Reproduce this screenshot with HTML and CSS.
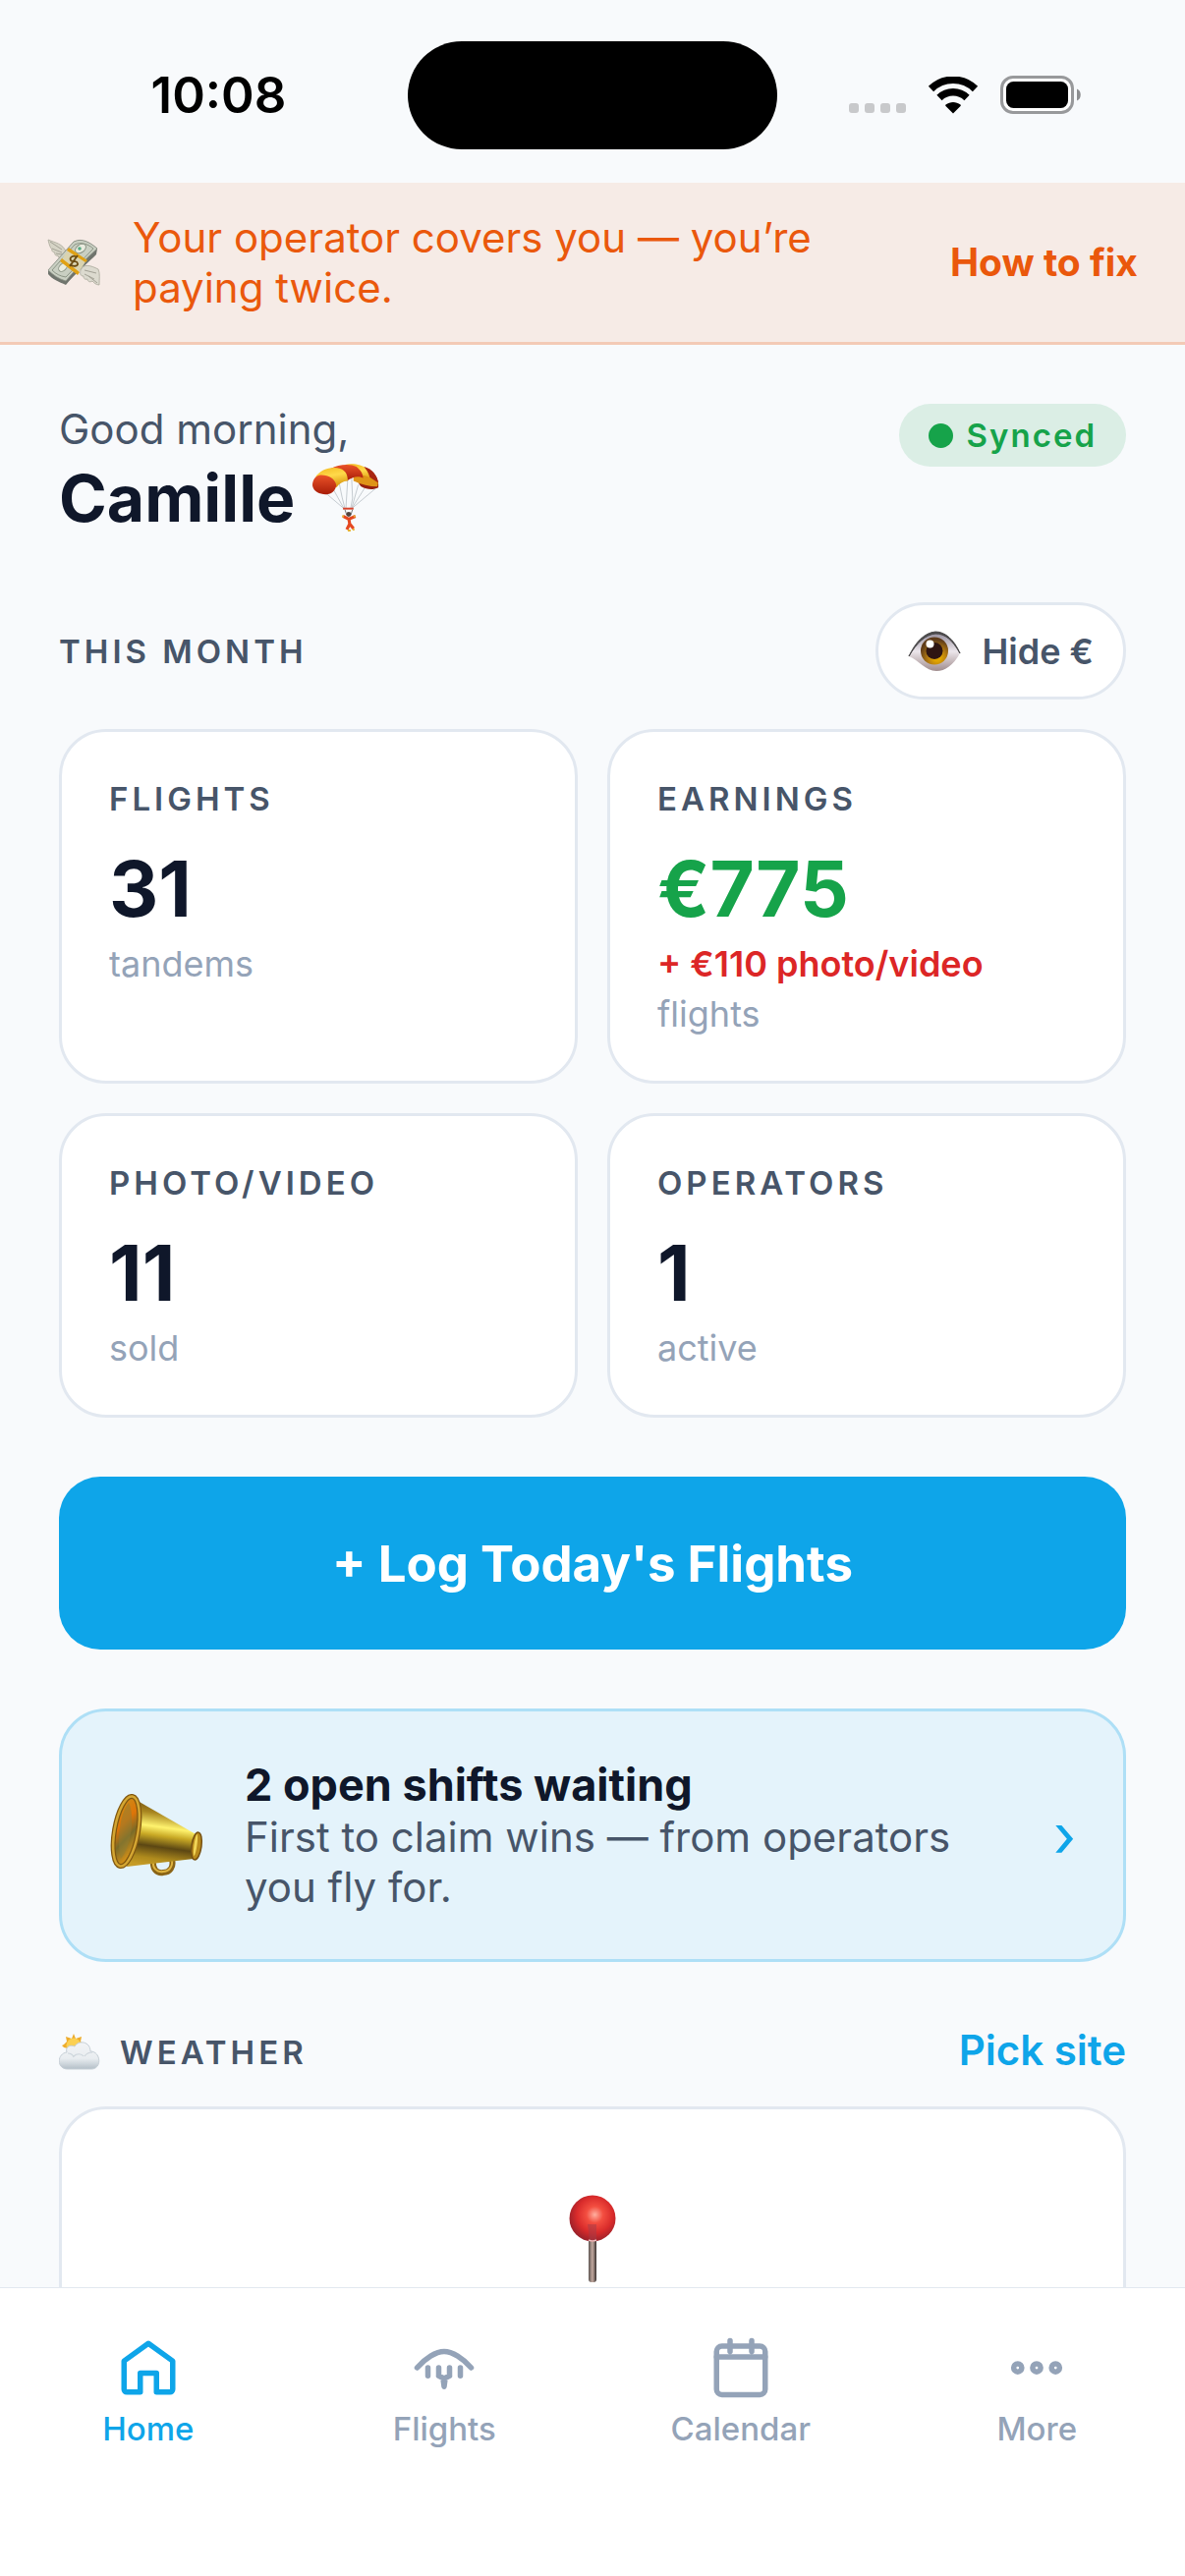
FILE: index.html
```html
<!DOCTYPE html>
<html lang="en">
<head>
    <meta charset="UTF-8">
    <meta name="viewport" content="width=device-width, initial-scale=1.0">
    <title>Home</title>
    <link rel="stylesheet" href="styles.css">
</head>
<body>
    <div class="app">
        <!-- Status bar -->
        <div class="status-bar">
            <span class="time">10:08</span>
            <span class="island"></span>
            <span class="status-icons">
                <svg width="58" height="38" viewBox="0 0 58 38" fill="#c8c9cb">
                    <rect x="0" y="27" width="10" height="10" rx="3" />
                    <rect x="16" y="27" width="10" height="10" rx="3" />
                    <rect x="32" y="27" width="10" height="10" rx="3" />
                    <rect x="48" y="27" width="10" height="10" rx="3" />
                </svg>
                <svg width="52" height="38" viewBox="0 0 52 38">
                    <path d="M3.5 12.5A32 32 0 0 1 48.5 12.5" fill="none" stroke="#000" stroke-width="7.5" />
                    <path d="M12 21.5A20 20 0 0 1 40 21.5" fill="none" stroke="#000" stroke-width="7.5" />
                    <path d="M26 37.5L18.5 30C18 29.5 18 29 18.5 28.5C23 25 29 25 33.5 28.5C34 29 34 29.5 33.5 30Z" />
                </svg>
                <svg width="83" height="40" viewBox="0 0 83 40">
                    <rect x="1.5" y="1.5" width="72" height="36" rx="11.5" fill="#fff" stroke="#98999b" stroke-width="3" />
                    <rect x="6" y="6" width="63" height="27" rx="7.5" />
                    <path d="M78 13.5C83 15 83 24 78 25.5Z" fill="#8d8e90" />
                </svg>
            </span>
        </div>

        <!-- Alert banner -->
        <div class="banner">
            <svg class="banner-icon" viewBox="0 0 54 48">
                <path d="M19 13C16 5 8 4 1 1C2 6 3 9 5 11C4 12 6 14 8 14C7 16 9 18 11 17C11 20 14 20 16 19Z" fill="#d6d4c6" stroke="#aaa89b" stroke-width="0.8" />
                <path d="M3 3L15 11M5 10L15 14M9 15L16 16" stroke="#a3a195" stroke-width="1" fill="none" />
                <path d="M1 33L27 3C35 -1 43 3 51 10L50 16C43 23 28 36 19 47C12 44 5 41 1 36Z" fill="#6f746d" />
                <path d="M1 32L27 3C35 -1 43 3 51 10C41 19 29 31 19 43C12 41 6 37 1 32Z" fill="#c9cfc2" stroke="#858b80" stroke-width="0.8" />
                <path d="M5 32L28 6C34 3 41 5 47 10L19 39C13 38 9 36 5 32Z" fill="none" stroke="#8d9687" stroke-width="1" />
                <ellipse cx="34" cy="10" rx="6" ry="4" transform="rotate(-35 34 10)" fill="#e9ecdf" stroke="#8d9687" />
                <circle cx="33" cy="10" r="1.8" fill="#55a982" />
                <ellipse cx="16" cy="29" rx="5" ry="3.5" transform="rotate(-45 16 29)" fill="#e9ecdf" stroke="#8d9687" />
                <path d="M14 22L22 10L40 22L31 36Z" fill="#d9d3b0" />
                <path d="M22 9L41 22L39 24L20 12ZM15 20L33 34L31 37L13 23Z" fill="#e0a114" />
                <path d="M30 19C27 16 22 19 24 22C26 25 30 21 31 25C32 28 26 29 23 26M31 17L23 28" fill="none" stroke="#6a4a10" stroke-width="1.8" />
                <path d="M34 32C37 25 44 27 52 31C54 35 53 41 53 47C49 47 47 44 46 43C43 45 41 43 41 41C38 42 37 40 37 38C34 38 33 36 34 32Z" fill="#dcdacf" stroke="#aaa89b" stroke-width="0.8" />
                <path d="M38 32L50 35M38 36L48 41M42 38L51 45" stroke="#a3a195" stroke-width="1" fill="none" />
            </svg>
            <p class="banner-text">Your operator covers you — you’re paying twice.</p>
            <button class="banner-action" type="button">How to fix</button>
        </div>

        <main class="content">
            <header class="greeting">
                <div>
                    <p class="hello">Good morning,</p>
                    <h1 class="name">Camille
                        <svg class="name-icon" viewBox="0 0 70 72">
                            <defs>
                                <linearGradient id="wing-red" x1="0" y1="0" x2="0" y2="1">
                                    <stop offset="0" stop-color="#ea5228" />
                                    <stop offset="1" stop-color="#a81c08" />
                                </linearGradient>
                                <linearGradient id="wing-yellow" x1="0" y1="0" x2="0.3" y2="1">
                                    <stop offset="0" stop-color="#f3b91f" />
                                    <stop offset="0.5" stop-color="#ffd94a" />
                                    <stop offset="1" stop-color="#dc9a12" />
                                </linearGradient>
                            </defs>
                            <path d="M13 30L33 47M22 27L33 47M28 20L31 35L34 47M37 15L35 47M41 15L42 36L40 47M48 22L41 47M55 25L41 47M66 26L41 47" fill="none" stroke="#c3c9ce" stroke-width="1" />
                            <path d="M55 4C65 7 70 16 69 25C63 28 57 27 51 24C46 18 44 10 55 4Z" fill="#96200f" />
                            <path d="M43 10C51 8 62 12 69 19L68 24C60 24 51 22 43 18Z" fill="#df9418" />
                            <path d="M34 1C42 -1 52 1 57 5C62 8 66 14 67 19C60 13 53 11 47 12Z" fill="url(#wing-yellow)" />
                            <path d="M54 3C62 5 68 12 69 20L60 14C59 9 56 6 54 3Z" fill="#a92611" />
                            <path d="M19 5C28 0 40 0 46 3C51 7 53 11 53 15C47 12 42 14 36 18C35 10 29 7 19 5Z" fill="url(#wing-red)" />
                            <path d="M3 14C8 6 20 2 29 5C35 7 37 12 37 18C32 18 28 21 25 25C22 16 14 12 3 14Z" fill="url(#wing-yellow)" />
                            <path d="M0 23C0 17 3 13 7 12C15 11 24 15 25 23C24 28 20 32 16 32C10 33 1 30 0 23Z" fill="url(#wing-red)" />
                            <path d="M32 47H43" stroke="#d8422b" stroke-width="2" />
                            <path d="M34 48L36 54M42 48L40 54" stroke="#777" stroke-width="1" />
                            <circle cx="38" cy="53" r="2.5" fill="#51423d" />
                            <path d="M32 55L38 58L45 55M38 57L39 63L36 69M39 63L43 68" fill="none" stroke="#e54820" stroke-width="3.2" stroke-linejoin="round" />
                            <path d="M32 54V56M44 54V56M37 70H40M42 69H44" stroke="#e8b330" stroke-width="2" />
                        </svg>
                    </h1>
                </div>
                <span class="synced"><span class="synced-dot"></span>Synced</span>
            </header>

            <div class="section-head">
                <h2 class="label">THIS MONTH</h2>
                <button class="hide-button" type="button">
                    <svg class="hide-icon" viewBox="0 0 54 42">
                        <defs>
                            <linearGradient id="eye-white" x1="0" y1="0" x2="0" y2="1">
                                <stop offset="0" stop-color="#8f8898" />
                                <stop offset="0.5" stop-color="#ece6eb" />
                                <stop offset="1" stop-color="#a08c8d" />
                            </linearGradient>
                            <radialGradient id="eye-iris" cx="0.6" cy="0.75" r="0.65">
                                <stop offset="0.2" stop-color="#e0a400" />
                                <stop offset="0.5" stop-color="#b87e10" />
                                <stop offset="1" stop-color="#5f3c1a" />
                            </radialGradient>
                        </defs>
                        <path d="M1 26C8 11 17 2 28 1C38 1 47 9 53 23C46 35 38 41 29 41C18 41 11 30 1 26Z" fill="url(#eye-white)" />
                        <circle cx="27" cy="20.5" r="14" fill="url(#eye-iris)" />
                        <circle cx="27" cy="20.5" r="8.5" fill="#2e1512" />
                        <circle cx="22.5" cy="13.5" r="4" fill="#fff" />
                        <path d="M1 26C8 11 17 2 28 1C38 1 47 9 53 23C45 9 38 3 28 3C18 4 9 12 1 26Z" fill="#4b4a4b" stroke="#4b4a4b" />
                    </svg>
                    Hide €
                </button>
            </div>

            <!-- Monthly stats -->
            <section class="stats">
                <div class="card">
                    <h3 class="label">FLIGHTS</h3>
                    <p class="value">31</p>
                    <p class="sub">tandems</p>
                </div>
                <div class="card">
                    <h3 class="label">EARNINGS</h3>
                    <p class="value earned">€775</p>
                    <p class="sub extra">+ €110 photo/video</p>
                    <p class="sub">flights</p>
                </div>
                <div class="card">
                    <h3 class="label">PHOTO/VIDEO</h3>
                    <p class="value">11</p>
                    <p class="sub">sold</p>
                </div>
                <div class="card">
                    <h3 class="label">OPERATORS</h3>
                    <p class="value">1</p>
                    <p class="sub">active</p>
                </div>
            </section>

            <button class="log-button" type="button">+ Log Today's Flights</button>

            <!-- Open shifts -->
            <a class="shifts" href="#shifts">
                <svg class="shifts-icon" viewBox="0 0 96 84">
                    <defs>
                        <linearGradient id="horn" x1="0.55" y1="0" x2="0.4" y2="1">
                            <stop offset="0" stop-color="#6b4a12" />
                            <stop offset="0.2" stop-color="#a98620" />
                            <stop offset="0.4" stop-color="#fff36e" />
                            <stop offset="0.53" stop-color="#c9a925" />
                            <stop offset="0.7" stop-color="#5c4713" />
                            <stop offset="0.88" stop-color="#ae8a1d" />
                            <stop offset="1" stop-color="#c69c27" />
                        </linearGradient>
                        <linearGradient id="horn-inside" x1="0" y1="0" x2="0.5" y2="1">
                            <stop offset="0" stop-color="#c5951d" />
                            <stop offset="0.45" stop-color="#de7408" />
                            <stop offset="0.7" stop-color="#7a6b28" />
                            <stop offset="1" stop-color="#d39018" />
                        </linearGradient>
                    </defs>
                    <path d="M45 68C44 77 49 81 55 80C62 80 66 74 64 67" fill="none" stroke="#8a6416" stroke-width="6" />
                    <path d="M45 68C44 76 49 80 55 79C61 79 65 74 64 67" fill="none" stroke="#dfb440" stroke-width="2" />
                    <path d="M29 7L90 42C91 50 90 60 86 66L18 74Z" fill="url(#horn)" />
                    <ellipse cx="17.5" cy="38" rx="12" ry="36" transform="rotate(10 17.5 38)" fill="url(#horn-inside)" stroke="#80570f" stroke-width="5" />
                    <ellipse cx="17.5" cy="38" rx="12" ry="36" transform="rotate(10 17.5 38)" fill="none" stroke="#d4a632" stroke-width="2.5" />
                    <path d="M20 9C10 21 8 51 12 66C22 54 27 23 20 9Z" fill="#8d7d34" opacity="0.5" />
                    <ellipse cx="89" cy="53" rx="5" ry="14" transform="rotate(8 89 53)" fill="#b98b1d" stroke="#765012" stroke-width="1.5" />
                    <ellipse cx="88" cy="52" rx="1.5" ry="11" transform="rotate(8 88 52)" fill="#f1d557" />
                </svg>
                <div class="shifts-body">
                    <h3 class="shifts-title">2 open shifts waiting</h3>
                    <p class="shifts-text">First to claim wins — from operators you fly for.</p>
                </div>
                <span class="chevron">›</span>
            </a>

            <div class="section-head weather-head">
                <h2 class="label weather-label">
                    <svg class="weather-icon" viewBox="0 0 42 38">
                        <defs>
                            <linearGradient id="cloud" x1="0" y1="0" x2="0" y2="1">
                                <stop offset="0" stop-color="#f2f4f6" />
                                <stop offset="0.6" stop-color="#e9edf0" />
                                <stop offset="1" stop-color="#b3bfc8" />
                            </linearGradient>
                        </defs>
                        <path d="M15 0L17 5L23 3L22 8L27 12H4L8 8L7 3L13 5ZM3 12L9 9V15L5 14Z" fill="#edac2c" />
                        <circle cx="15" cy="12" r="7.5" fill="#fbd052" />
                        <path d="M9 36C-3 36 -2 20 8 19C6 13 12 11 16 13C20 6 32 8 32 18C43 18 44 36 33 36Z" fill="url(#cloud)" stroke="#c6cfd6" stroke-width="1" />
                        <path d="M9 20C12 20 14 21 15 24M15 23C18 20 23 20 25 23M26 23C28 20 31 19 34 19" fill="none" stroke="#cdd5db" stroke-width="1.2" />
                    </svg>
                    WEATHER
                </h2>
                <a class="pick-site" href="#sites">Pick site</a>
            </div>

            <section class="card weather-card">
                <svg class="pin" viewBox="0 0 48 90">
                    <defs>
                        <radialGradient id="pin-head" cx="0.55" cy="0.42" r="0.6">
                            <stop offset="0" stop-color="#ffaf9f" />
                            <stop offset="0.3" stop-color="#f34e40" />
                            <stop offset="0.65" stop-color="#d92b2b" />
                            <stop offset="1" stop-color="#94202a" />
                        </radialGradient>
                        <linearGradient id="pin-stem">
                            <stop offset="0" stop-color="#5d5552" />
                            <stop offset="0.5" stop-color="#c4aaa0" />
                            <stop offset="1" stop-color="#352e2d" />
                        </linearGradient>
                    </defs>
                    <rect x="20" y="44" width="8" height="45" rx="3" fill="url(#pin-stem)" />
                    <circle cx="24" cy="24" r="23.5" fill="url(#pin-head)" />
                    <path d="M19 30H28V46H21Z" fill="#a43b48" opacity="0.5" />
                    <path d="M20 46Q24 48 28 46" stroke="#f0c0c0" stroke-width="1.5" fill="none" />
                </svg>
            </section>
        </main>

        <!-- Tab bar -->
        <nav class="tabs">
            <a class="tab active" href="#home">
                <svg class="tab-icon" viewBox="0 0 24 24">
                    <path d="M3 9.5L12 3L21 9.5V20A1 1 0 0 1 20 21H15V14H9V21H4A1 1 0 0 1 3 20Z" />
                </svg>
                Home
            </a>
            <a class="tab" href="#flights">
                <svg class="tab-icon" viewBox="0 0 24 24">
                    <path d="M2 12C5 8.5 9 6 12 6S19 8.5 22 12" />
                    <path d="M6 12V15M10 12V15M14 12V15M18 12V15M10 15L12 16L14 15M11.6 16L12 19L12.4 16" />
                </svg>
                Flights
            </a>
            <a class="tab" href="#calendar">
                <svg class="tab-icon" viewBox="0 0 24 24">
                    <rect x="3" y="4" width="18" height="18" rx="2" />
                    <path d="M3 8H21M8 2V6M16 2V6" />
                </svg>
                Calendar
            </a>
            <a class="tab" href="#more">
                <svg class="tab-icon" viewBox="0 0 24 24">
                    <circle cx="5" cy="12" r="1.5" />
                    <circle cx="12" cy="12" r="1.5" />
                    <circle cx="19" cy="12" r="1.5" />
                </svg>
                More
            </a>
        </nav>
    </div>
</body>
</html>
```
FILE: styles.css
```css
* {
    box-sizing: border-box;
}

body {
    margin: 0;
    background-color: #f8fafc;
    color: #0f172a;
    font-family: Inter, "Liberation Sans", sans-serif;
}

h1, h2, h3, p {
    margin: 0;
}

button {
    font-family: inherit;
    cursor: pointer;
}

a {
    text-decoration: none;
}

svg {
    flex-shrink: 0;
}

.app {
    display: flex;
    flex-direction: column;
    height: 100vh;
}

/* Status bar */
.status-bar {
    display: grid;
    grid-template-columns: 1fr 376px 1fr;
    align-items: center;
    flex-shrink: 0;
    height: 186px;
    padding-top: 8px;
    color: #000;
}

.time {
    padding-left: 30px;
    text-align: center;
    font-size: 51px;
    font-weight: 600;
    line-height: 60px;
}

.island {
    height: 110px;
    border-radius: 55px;
    background-color: #000;
}

.status-icons {
    display: flex;
    align-items: center;
    justify-content: center;
    gap: 22px;
    padding-right: 32px;
}

/* Banner */
.banner {
    display: flex;
    align-items: center;
    flex-shrink: 0;
    gap: 33px;
    padding: 30px 48px;
    background-color: rgba(234, 88, 12, 0.09);
    border-bottom: 3px solid rgba(234, 88, 12, 0.22);
}

.banner-icon {
    width: 54px;
    height: 48px;
}

.banner-text {
    flex: 1;
    color: #ea580c;
    font-size: 42px;
    line-height: 51px;
}

.banner-action {
    padding: 0;
    border: 0;
    background: none;
    color: #ea580c;
    font-size: 39px;
    font-weight: 700;
    line-height: 48px;
}

/* Scrolling content */
.content {
    flex: 1;
    min-height: 0;
    overflow-y: auto;
    scrollbar-width: none;
    padding: 60px 60px 0;
}

.greeting {
    display: flex;
    align-items: flex-start;
    justify-content: space-between;
}

.hello {
    color: #475569;
    font-size: 42px;
    line-height: 51px;
}

.name {
    display: flex;
    align-items: center;
    gap: 18px;
    margin-top: 6px;
    font-size: 66px;
    font-weight: 700;
    line-height: 78px;
}

.name-icon {
    width: 68px;
    height: 70px;
}

.synced {
    display: flex;
    align-items: center;
    gap: 14px;
    padding: 12px 30px;
    border-radius: 32px;
    background-color: rgba(22, 163, 74, 0.13);
    color: #16a34a;
    font-size: 33px;
    font-weight: 600;
    line-height: 40px;
    letter-spacing: 2px;
}

.synced-dot {
    width: 25px;
    height: 25px;
    border-radius: 50%;
    background-color: #16a34a;
}

.section-head {
    display: flex;
    align-items: center;
    justify-content: space-between;
    margin: 67px 0 30px;
}

.label {
    color: #475569;
    font-size: 33px;
    font-weight: 600;
    line-height: 40px;
    letter-spacing: 4px;
}

.hide-button {
    display: flex;
    align-items: center;
    gap: 21px;
    height: 99px;
    padding: 0 30px;
    border: 3px solid #e2e8f0;
    border-radius: 50px;
    background-color: #fff;
    color: #475569;
    font-size: 36px;
    font-weight: 600;
}

.hide-icon {
    width: 54px;
    height: 42px;
}

/* Cards */
.stats {
    display: grid;
    grid-template-columns: 1fr 1fr;
    gap: 30px;
}

.card {
    padding: 48px 48px 42px;
    border: 3px solid #e2e8f0;
    border-radius: 48px;
    background-color: #fff;
}

.value {
    margin: 25px 0 4px;
    font-size: 78px;
    font-weight: 700;
    line-height: 94px;
}

.earned {
    color: #16a34a;
}

.sub {
    color: #94a3b8;
    font-size: 36px;
    line-height: 51px;
}

.extra {
    color: #dc2626;
    font-weight: 600;
}

.log-button {
    display: block;
    width: 100%;
    height: 176px;
    margin: 60px 0;
    border: 0;
    border-radius: 42px;
    background-color: #0ea5e9;
    color: #fff;
    font-size: 51px;
    font-weight: 700;
}

.shifts {
    display: flex;
    align-items: center;
    gap: 42px;
    padding: 48px;
    border: 3px solid #aedff6;
    border-radius: 48px;
    background-color: #e4f3fb;
    color: #0f172a;
}

.shifts-icon {
    width: 96px;
    height: 84px;
}

.shifts-body {
    flex: 1;
}

.shifts-title {
    font-size: 45px;
    font-weight: 700;
    line-height: 54px;
}

.shifts-text {
    color: #475569;
    font-size: 42px;
    line-height: 51px;
}

.chevron {
    color: #0ea5e9;
    font-size: 60px;
    font-weight: 400;
    line-height: 66px;
}

/* Weather */
.weather-head {
    margin: 62px 0 30px;
}

.weather-label {
    display: flex;
    align-items: center;
    gap: 20px;
    padding-top: 4px;
}

.weather-icon {
    width: 42px;
    height: 38px;
}

.pick-site {
    padding: 2px 0;
    color: #0ea5e9;
    font-size: 42px;
    font-weight: 600;
    line-height: 51px;
}

.weather-card {
    display: flex;
    justify-content: center;
    padding: 87px 48px;
}

.pin {
    width: 48px;
    height: 90px;
}

/* Tab bar */
.tabs {
    display: grid;
    grid-template-columns: repeat(4, 1fr);
    flex-shrink: 0;
    padding: 48px 0 128px;
    border-top: 1px solid #e2e8f0;
    background-color: #fff;
}

.tab {
    display: flex;
    flex-direction: column;
    align-items: center;
    gap: 7px;
    color: #94a3b8;
    font-size: 33px;
    font-weight: 500;
    line-height: 44px;
}

.tab-icon {
    width: 66px;
    height: 66px;
    fill: none;
    stroke: currentColor;
    stroke-width: 2;
    stroke-linecap: round;
    stroke-linejoin: round;
}

.active {
    color: #0ea5e9;
}
```
